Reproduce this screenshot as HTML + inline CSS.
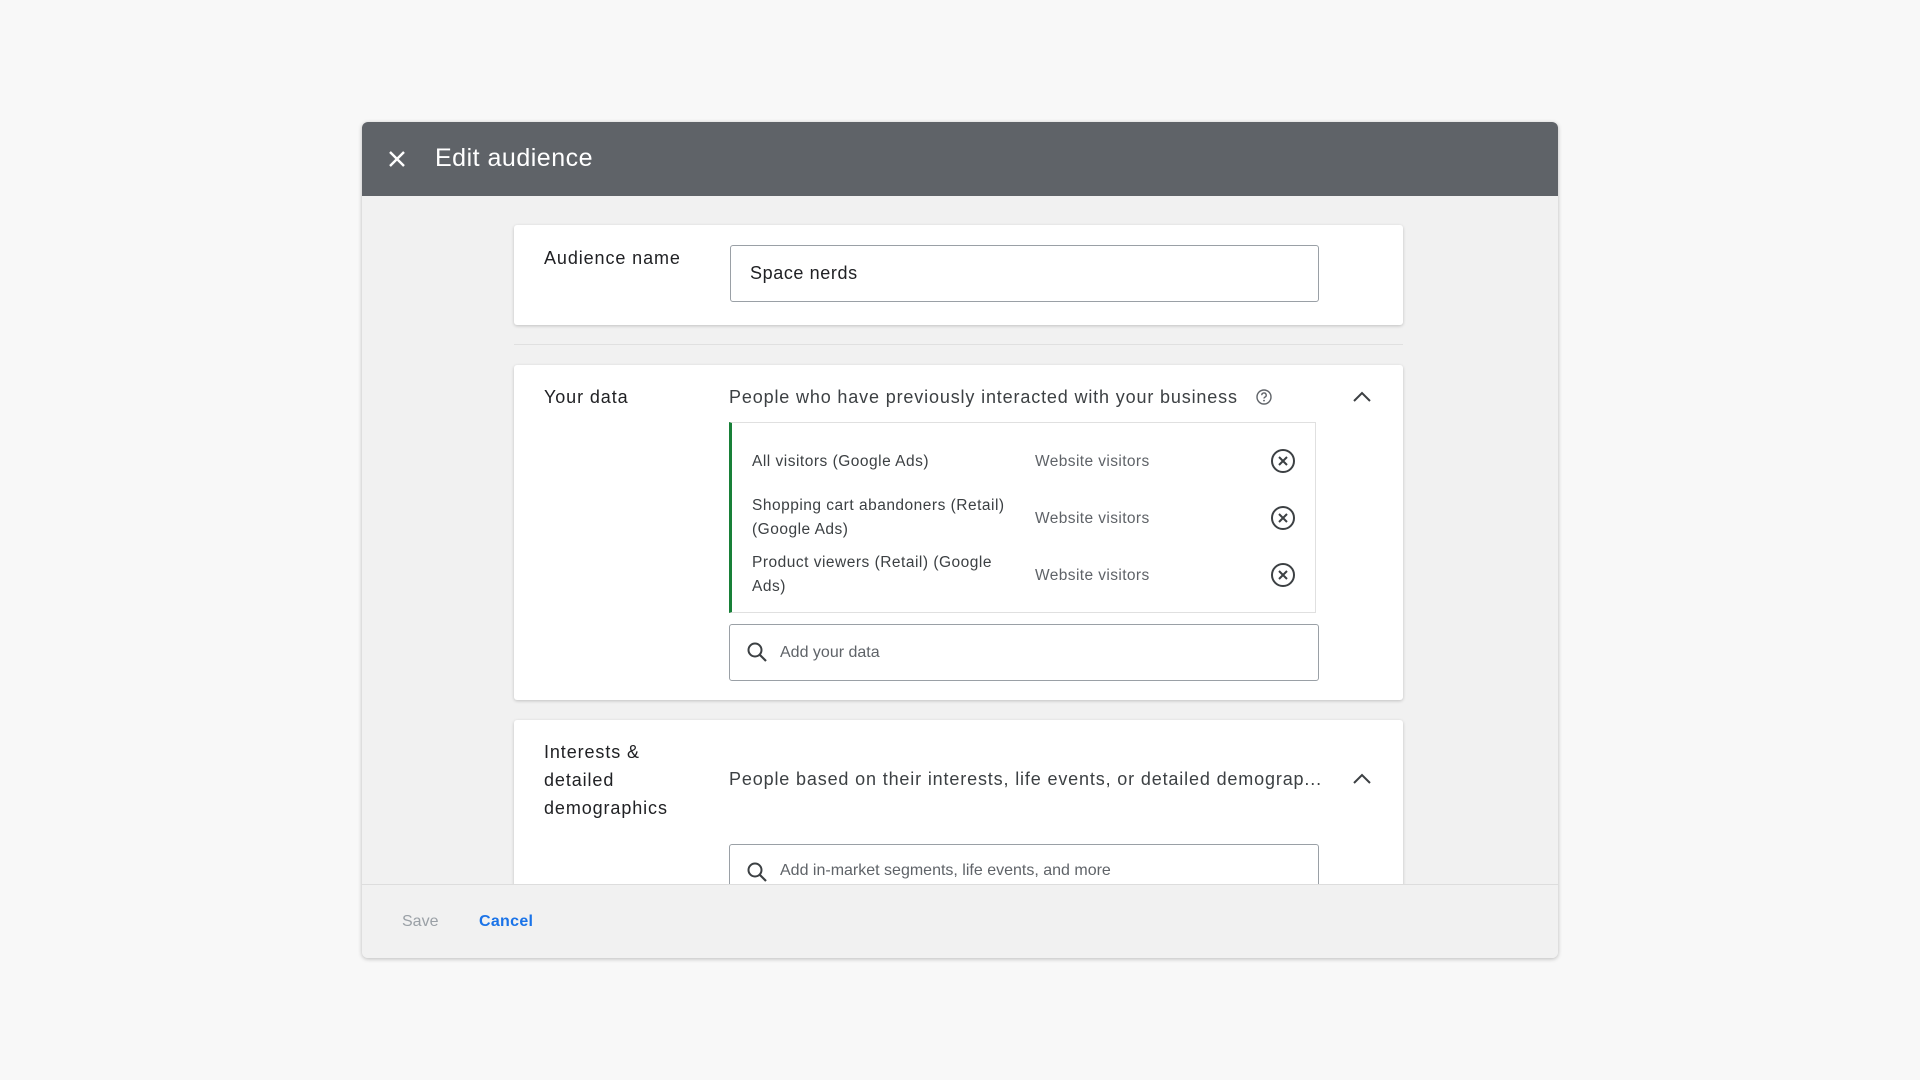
<!DOCTYPE html>
<html><head><style>
body{margin:0;width:1920px;height:1080px;background:#f8f8f8;font-family:"Liberation Sans",sans-serif;position:relative;overflow:hidden;color:#202124}
.dlg{position:absolute;left:362px;top:122px;width:1196px;height:836px;background:#f1f1f1;border-radius:6px;box-shadow:0 1px 4px rgba(0,0,0,.25);overflow:hidden}
.hdr{position:absolute;left:0;top:0;width:100%;height:74px;background:#5f6368}
.hdr .t{position:absolute;left:73px;top:22px;color:#fff;font-size:25px;letter-spacing:.5px}
.card{position:absolute;left:152px;width:889px;background:#fff;box-shadow:0 1px 3px rgba(0,0,0,.2);border-radius:3px}
.lbl{position:absolute;left:30px;font-size:18px;color:#202124;letter-spacing:.9px}
.inp{position:absolute;left:216px;width:587px;border:1px solid #9aa0a6;border-radius:3px;background:#fff}
.desc{position:absolute;left:215px;font-size:18px;color:#3c4043;white-space:nowrap;letter-spacing:.85px}
.row{position:absolute;left:20px;font-size:15.5px;color:#3c4043;line-height:24px;letter-spacing:.5px}
.c2{position:absolute;left:303px;font-size:15.5px;color:#5f6368;letter-spacing:.4px}
.ph{position:absolute;left:50px;top:19px;font-size:16px;color:#5f6368}
.ftr{position:absolute;left:0;top:762px;width:100%;height:74px;background:#f1f1f1;border-top:1px solid #ddd}
</style></head><body>
<div class="dlg">
 <div class="hdr">
  <svg style="position:absolute;left:25px;top:27px" width="20" height="20" viewBox="0 0 20 20"><path d="M3 3L17 17M17 3L3 17" stroke="#fff" stroke-width="2.4"/></svg>
  <div class="t">Edit audience</div>
 </div>
 <div class="card" style="top:103px;height:100px">
  <div class="lbl" style="top:23px">Audience name</div>
  <div class="inp" style="top:20px;height:55px"><div style="position:absolute;left:19px;top:17px;font-size:18px;letter-spacing:.6px">Space nerds</div></div>
 </div>
 <div style="position:absolute;left:152px;top:222px;width:889px;height:1px;background:#e0e0e0"></div>
 <div class="card" style="top:243px;height:335px">
  <div class="lbl" style="top:22px">Your data</div>
  <div class="desc" style="top:22px">People who have previously interacted with your business</div>
  <svg style="position:absolute;left:741px;top:23px" width="18" height="18" viewBox="0 0 18 18"><circle cx="9" cy="9" r="7" fill="none" stroke="#5f6368" stroke-width="1.4"/><path d="M6.8 7.2a2.2 2.2 0 1 1 3 2c-.6.3-.8.7-.8 1.3" fill="none" stroke="#5f6368" stroke-width="1.4"/><circle cx="9" cy="12.6" r=".9" fill="#5f6368"/></svg>
  <svg style="position:absolute;left:838px;top:24px" width="20" height="14" viewBox="0 0 20 14"><path d="M2 12L10 4L18 12" fill="none" stroke="#3c4043" stroke-width="2"/></svg>
  <div style="position:absolute;left:215px;top:57px;width:587px;height:191px;border:1px solid #e0e0e0;border-left:3px solid #188038;box-sizing:border-box">
   <div class="row" style="top:27px">All visitors (Google Ads)</div>
   <div class="c2" style="top:30px">Website visitors</div>
   <div class="row" style="top:71px">Shopping cart abandoners (Retail)<br>(Google Ads)</div>
   <div class="c2" style="top:87px">Website visitors</div>
   <div class="row" style="top:128px">Product viewers (Retail) (Google<br>Ads)</div>
   <div class="c2" style="top:144px">Website visitors</div>
   <svg style="position:absolute;left:538px;top:25px" width="26" height="26" viewBox="0 0 26 26"><circle cx="13" cy="13" r="11" fill="none" stroke="#3c4043" stroke-width="2"/><path d="M9 9L17 17M17 9L9 17" stroke="#3c4043" stroke-width="2"/></svg>
   <svg style="position:absolute;left:538px;top:82px" width="26" height="26" viewBox="0 0 26 26"><circle cx="13" cy="13" r="11" fill="none" stroke="#3c4043" stroke-width="2"/><path d="M9 9L17 17M17 9L9 17" stroke="#3c4043" stroke-width="2"/></svg>
   <svg style="position:absolute;left:538px;top:139px" width="26" height="26" viewBox="0 0 26 26"><circle cx="13" cy="13" r="11" fill="none" stroke="#3c4043" stroke-width="2"/><path d="M9 9L17 17M17 9L9 17" stroke="#3c4043" stroke-width="2"/></svg>
  </div>
  <div class="inp" style="left:215px;top:259px;height:55px;width:588px">
   <svg style="position:absolute;left:16px;top:16px" width="22" height="22" viewBox="0 0 22 22"><circle cx="9" cy="9" r="6.5" fill="none" stroke="#3c4043" stroke-width="2"/><path d="M14 14L20 20" stroke="#3c4043" stroke-width="2.2"/></svg>
   <div class="ph">Add your data</div>
  </div>
 </div>
 <div class="card" style="top:598px;height:200px">
  <div class="lbl" style="top:18px;line-height:28px">Interests &amp;<br>detailed<br>demographics</div>
  <div class="desc" style="top:49px">People based on their interests, life events, or detailed demograp...</div>
  <svg style="position:absolute;left:838px;top:51px" width="20" height="14" viewBox="0 0 20 14"><path d="M2 12L10 4L18 12" fill="none" stroke="#3c4043" stroke-width="2"/></svg>
  <div class="inp" style="left:215px;top:124px;height:55px;width:588px">
   <svg style="position:absolute;left:16px;top:16px" width="22" height="22" viewBox="0 0 22 22"><circle cx="9" cy="9" r="6.5" fill="none" stroke="#3c4043" stroke-width="2"/><path d="M14 14L20 20" stroke="#3c4043" stroke-width="2.2"/></svg>
   <div class="ph" style="top:17px">Add in-market segments, life events, and more</div>
  </div>
 </div>
 <div class="ftr">
  <div style="position:absolute;left:40px;top:28px;font-size:16px;color:#9aa0a6">Save</div>
  <div style="position:absolute;left:117px;top:28px;font-size:16px;color:#1a73e8;font-weight:bold;letter-spacing:.3px">Cancel</div>
 </div>
</div>
</body></html>
